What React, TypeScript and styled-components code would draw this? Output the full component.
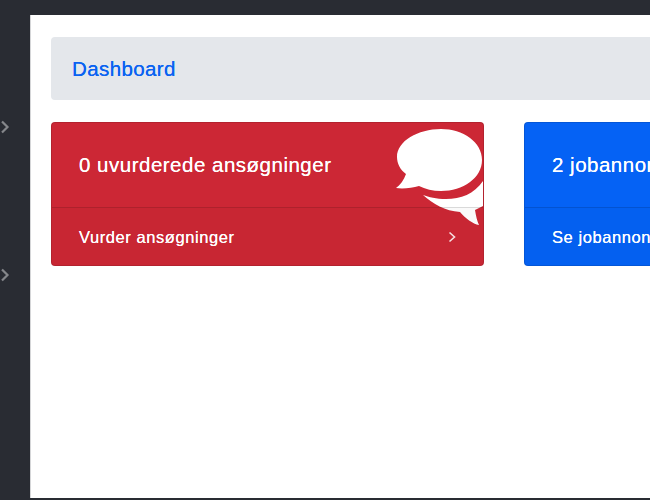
import React from 'react'
import styled, { createGlobalStyle } from 'styled-components'

const GlobalStyle = createGlobalStyle`
  html, body {
    margin: 0;
    height: 100%;
    overflow: hidden;
    background-color: #292c33;
    font-family: "Liberation Sans", Arial, sans-serif;
  }
`

const Shell = styled.div`
  display: grid;
  grid-template-columns: 30px 1fr;
  width: 650px;
  height: 500px;
  overflow: hidden;
`

const Sidebar = styled.aside`
  display: flex;
  flex-direction: column;
  padding-top: 120px;
  gap: 134px;
`

const SideArrow = styled.svg`
  display: block;
  width: 10px;
  height: 14px;
  fill: none;
  stroke: #85878b;
  stroke-width: 2.2;
`

const Main = styled.main`
  margin: 15px 0 2px;
  padding: 22px 0 0 20px;
  background-color: #fff;
  border-left: 1px solid #d5d6d8;
  overflow: hidden;
`

const Breadcrumb = styled.nav`
  display: flex;
  align-items: center;
  box-sizing: border-box;
  width: 800px;
  height: 63px;
  padding-left: 21px;
  margin-bottom: 22px;
  background-color: #e4e7eb;
  border-radius: 4px;
`

const Crumb = styled.a`
  color: #0a62f2;
  font-size: 20.5px;
  letter-spacing: 0.4px;
  text-decoration: none;
  text-shadow: 0 0 0.5px currentColor;
`

const Cards = styled.div`
  display: grid;
  grid-template-columns: 433px 433px;
  gap: 40px;
`

const Card = styled.section<{ $color: string }>`
  position: relative;
  display: flex;
  flex-direction: column;
  box-sizing: border-box;
  height: 144px;
  overflow: hidden;
  background-color: ${(p) => p.$color};
  border: 1px solid rgba(0, 0, 0, 0.12);
  border-radius: 4px;
  color: #fff;
`

const CardBody = styled.div`
  display: flex;
  align-items: center;
  height: 84px;
  padding: 0 27px;
  font-size: 20.5px;
  letter-spacing: 0.5px;
  white-space: nowrap;
  text-shadow: 0 0 0.5px currentColor;
`

const CardFooter = styled.a`
  position: relative;
  z-index: 1;
  flex: 1;
  display: flex;
  align-items: center;
  justify-content: space-between;
  padding: 1px 27px 0;
  background-color: rgba(0, 0, 0, 0.02);
  border-top: 1px solid rgba(0, 0, 0, 0.13);
  color: #fff;
  font-size: 16.5px;
  letter-spacing: 0.57px;
  white-space: nowrap;
  text-shadow: 0 0 0.5px currentColor;
`

const FooterArrow = styled.svg`
  display: block;
  width: 8px;
  height: 12px;
  fill: none;
  stroke: #f6dfe1;
  stroke-width: 1.6;
`

const Bubbles = styled.svg`
  position: absolute;
  top: 0;
  right: 0;
  width: 92px;
  height: 110px;
`

const Chevron = () => <path d="M1.5 1.5 L6.5 6 L1.5 10.5" />

const App = () => (
  <>
    <GlobalStyle />
    <Shell>
      <Sidebar>
        <SideArrow viewBox="0 0 10 14">
          <path d="M2 1.5 L7.5 7 L2 12.5" />
        </SideArrow>
        <SideArrow viewBox="0 0 10 14">
          <path d="M2 1.5 L7.5 7 L2 12.5" />
        </SideArrow>
      </Sidebar>
      <Main>
        <Breadcrumb>
          <Crumb>Dashboard</Crumb>
        </Breadcrumb>
        <Cards>
          <Card $color="#cc2735">
            <CardBody>0 uvurderede ansøgninger</CardBody>
            <Bubbles viewBox="391 123 92 110">
              <path
                fill="#fff"
                d="M441 129 C463 129 482 142 482 160 C482 178 463 191 441 191 C433 191 425 189 419 186 C412 188 403 189 396 188 C400 185 404 180 406 174 C400 170 397 163 397 157 C397 141 418 129 441 129 Z"
              />
              <path
                fill="#fff"
                d="M423 195 C429 197 436 199 446 199 C461 199 474 194 483 181 L483 206 L475 210 C476 216 477 221 479 225 C473 224 465 218 460 212 C445 211 433 204 423 195 Z"
              />
            </Bubbles>
            <CardFooter>
              Vurder ansøgninger
              <FooterArrow viewBox="0 0 8 12">
                <Chevron />
              </FooterArrow>
            </CardFooter>
          </Card>
          <Card $color="#0562f5">
            <CardBody>2 jobannoncer</CardBody>
            <CardFooter>Se jobannoncer</CardFooter>
          </Card>
        </Cards>
      </Main>
    </Shell>
  </>
)

export default App
